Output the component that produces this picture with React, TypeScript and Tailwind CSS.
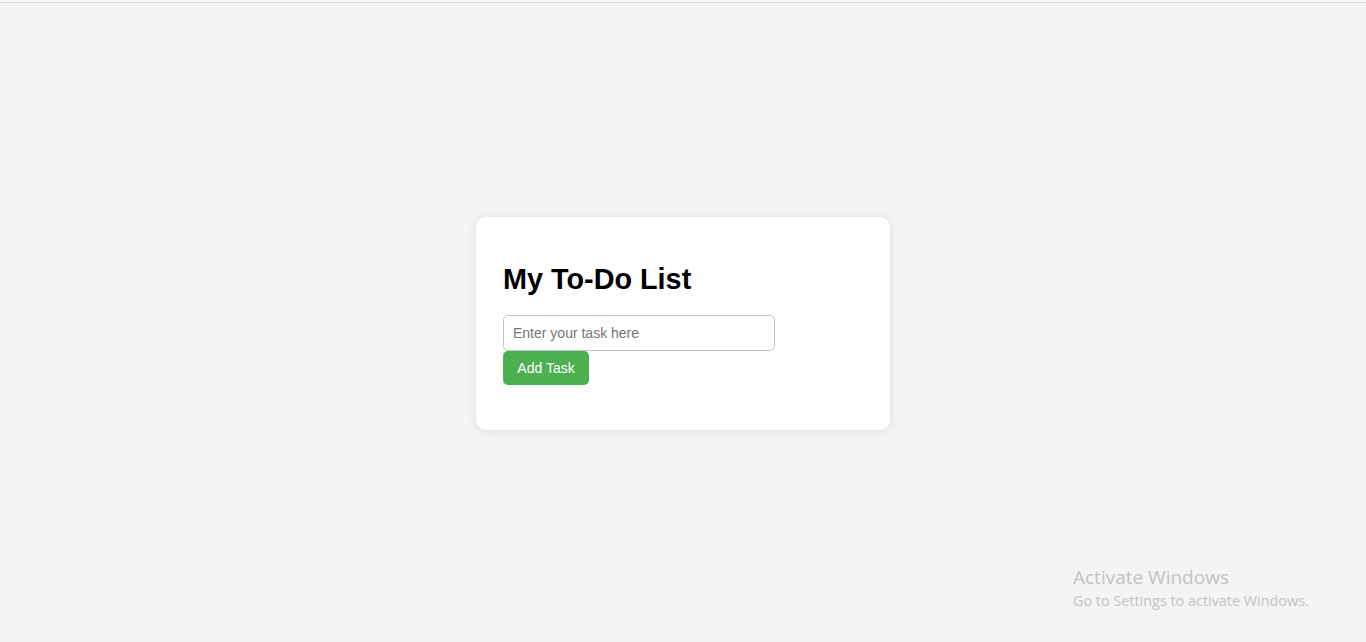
import { useState } from 'react';

export default function App() {
  const [task, setTask] = useState('');
  const [tasks, setTasks] = useState<string[]>([]);

  const addTask = () => {
    if (!task.trim()) return;
    setTasks([...tasks, task.trim()]);
    setTask('');
  };

  return (
    <div className="relative min-h-screen bg-[#f4f4f4] font-['Liberation_Sans',Arial,sans-serif] flex flex-col">
      {/* thin top edge */}
      <div className="h-[2px] bg-[#f7f7f7] border-b border-[#dedede] box-content" />

      <div className="flex-1 flex items-center justify-center pt-[2px]">
        <div className="w-[414px] bg-white rounded-[10px] shadow-[0_1px_10px_rgba(0,0,0,0.1)] px-[27px] pt-[46px] pb-[45px]">
          <h1 className="text-[28.8px] leading-[32px] font-bold text-black">My To-Do List</h1>

          <div className="mt-[20px] flex flex-col items-start">
            <input
              type="text"
              value={task}
              onChange={(e) => setTask(e.target.value)}
              placeholder="Enter your task here"
              className="w-[272px] h-[36px] px-[9px] text-[14px] text-[#333] placeholder:text-[#757575] border border-[#c4c4c4] rounded-[5px] outline-none"
            />
            <button
              onClick={addTask}
              className="w-[86px] h-[34px] bg-[#4caf50] text-white text-[14px] rounded-[5px] cursor-pointer"
            >
              Add Task
            </button>
          </div>

          {tasks.length > 0 && (
            <ul className="mt-3 space-y-1 text-[14px]">
              {tasks.map((t, i) => (
                <li key={i}>{t}</li>
              ))}
            </ul>
          )}
        </div>
      </div>

      {/* OS watermark overlay */}
      <div className="absolute left-[1073px] top-[564px] text-[#c3c3c3] font-['Open_Sans',sans-serif] pointer-events-none select-none">
        <p className="text-[19px] leading-[26px]">Activate Windows</p>
        <p className="text-[14.4px] leading-[20px] mt-[1px]">Go to Settings to activate Windows.</p>
      </div>
    </div>
  );
}
